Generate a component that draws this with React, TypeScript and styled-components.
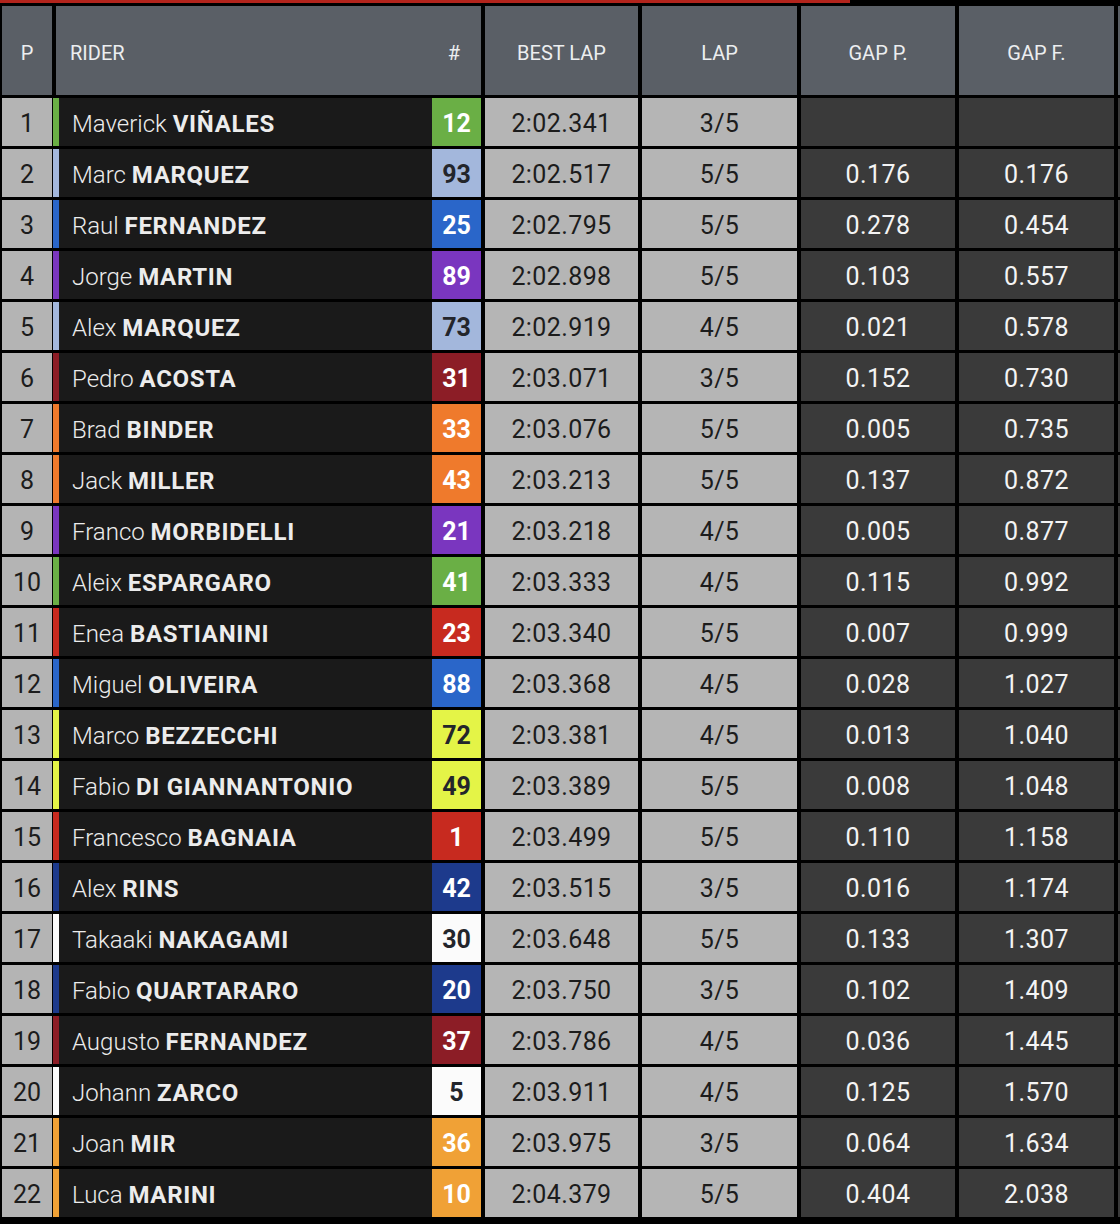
import styled, { createGlobalStyle } from 'styled-components'

const GlobalStyle = createGlobalStyle`
    html, body {
        margin: 0;
        padding: 0;
        background: #000;
    }
    body {
        font-family: Roboto, "Liberation Sans", sans-serif;
    }
`

type Rider = {
    pos: number
    first: string
    last: string
    num: string
    color: string
    dark?: boolean
    best: string
    lap: string
    gapP: string
    gapF: string
}

const GREEN = '#6aaf45'
const LIGHTBLUE = '#a3b7dc'
const BLUE = '#2a66c9'
const PURPLE = '#7a36bf'
const MAROON = '#8c1d26'
const ORANGE = '#ef7a2c'
const RED = '#c72a1f'
const YELLOW = '#e4f447'
const NAVY = '#1d3a8c'
const WHITE = '#fbfbfb'
const AMBER = '#f0a136'

const riders: Rider[] = [
    { pos: 1, first: 'Maverick', last: 'VIÑALES', num: '12', color: GREEN, best: '2:02.341', lap: '3/5', gapP: '', gapF: '' },
    { pos: 2, first: 'Marc', last: 'MARQUEZ', num: '93', color: LIGHTBLUE, dark: true, best: '2:02.517', lap: '5/5', gapP: '0.176', gapF: '0.176' },
    { pos: 3, first: 'Raul', last: 'FERNANDEZ', num: '25', color: BLUE, best: '2:02.795', lap: '5/5', gapP: '0.278', gapF: '0.454' },
    { pos: 4, first: 'Jorge', last: 'MARTIN', num: '89', color: PURPLE, best: '2:02.898', lap: '5/5', gapP: '0.103', gapF: '0.557' },
    { pos: 5, first: 'Alex', last: 'MARQUEZ', num: '73', color: LIGHTBLUE, dark: true, best: '2:02.919', lap: '4/5', gapP: '0.021', gapF: '0.578' },
    { pos: 6, first: 'Pedro', last: 'ACOSTA', num: '31', color: MAROON, best: '2:03.071', lap: '3/5', gapP: '0.152', gapF: '0.730' },
    { pos: 7, first: 'Brad', last: 'BINDER', num: '33', color: ORANGE, best: '2:03.076', lap: '5/5', gapP: '0.005', gapF: '0.735' },
    { pos: 8, first: 'Jack', last: 'MILLER', num: '43', color: ORANGE, best: '2:03.213', lap: '5/5', gapP: '0.137', gapF: '0.872' },
    { pos: 9, first: 'Franco', last: 'MORBIDELLI', num: '21', color: PURPLE, best: '2:03.218', lap: '4/5', gapP: '0.005', gapF: '0.877' },
    { pos: 10, first: 'Aleix', last: 'ESPARGARO', num: '41', color: GREEN, best: '2:03.333', lap: '4/5', gapP: '0.115', gapF: '0.992' },
    { pos: 11, first: 'Enea', last: 'BASTIANINI', num: '23', color: RED, best: '2:03.340', lap: '5/5', gapP: '0.007', gapF: '0.999' },
    { pos: 12, first: 'Miguel', last: 'OLIVEIRA', num: '88', color: BLUE, best: '2:03.368', lap: '4/5', gapP: '0.028', gapF: '1.027' },
    { pos: 13, first: 'Marco', last: 'BEZZECCHI', num: '72', color: YELLOW, dark: true, best: '2:03.381', lap: '4/5', gapP: '0.013', gapF: '1.040' },
    { pos: 14, first: 'Fabio', last: 'DI GIANNANTONIO', num: '49', color: YELLOW, dark: true, best: '2:03.389', lap: '5/5', gapP: '0.008', gapF: '1.048' },
    { pos: 15, first: 'Francesco', last: 'BAGNAIA', num: '1', color: RED, best: '2:03.499', lap: '5/5', gapP: '0.110', gapF: '1.158' },
    { pos: 16, first: 'Alex', last: 'RINS', num: '42', color: NAVY, best: '2:03.515', lap: '3/5', gapP: '0.016', gapF: '1.174' },
    { pos: 17, first: 'Takaaki', last: 'NAKAGAMI', num: '30', color: WHITE, dark: true, best: '2:03.648', lap: '5/5', gapP: '0.133', gapF: '1.307' },
    { pos: 18, first: 'Fabio', last: 'QUARTARARO', num: '20', color: NAVY, best: '2:03.750', lap: '3/5', gapP: '0.102', gapF: '1.409' },
    { pos: 19, first: 'Augusto', last: 'FERNANDEZ', num: '37', color: MAROON, best: '2:03.786', lap: '4/5', gapP: '0.036', gapF: '1.445' },
    { pos: 20, first: 'Johann', last: 'ZARCO', num: '5', color: WHITE, dark: true, best: '2:03.911', lap: '4/5', gapP: '0.125', gapF: '1.570' },
    { pos: 21, first: 'Joan', last: 'MIR', num: '36', color: AMBER, best: '2:03.975', lap: '3/5', gapP: '0.064', gapF: '1.634' },
    { pos: 22, first: 'Luca', last: 'MARINI', num: '10', color: AMBER, best: '2:04.379', lap: '5/5', gapP: '0.404', gapF: '2.038' },
]

const Page = styled.div`
    width: 1120px;
    height: 1224px;
    overflow: hidden;
    background: #000;
`
const TopBar = styled.div`
    width: 850px;
    height: 3px;
    background: #b3241c;
`
const Table = styled.div`
    display: grid;
    grid-template-columns: 50px 425px 153px 155px 154px 155px 40px;
    grid-auto-rows: 48px;
    grid-template-rows: 89px;
    column-gap: 4px;
    row-gap: 3px;
    padding: 3px 0 0 2px;
`
const Head = styled.div<{ $align?: string }>`
    background: #5a5f66;
    color: #eceef0;
    font-size: 20px;
    font-weight: 400;
    padding-top: 4px;
    display: flex;
    align-items: center;
    justify-content: ${p => p.$align ?? 'center'};
`
const RiderHead = styled(Head)`
    padding: 4px 21px 0 14px;
    justify-content: space-between;
`
const Cell = styled.div`
    font-size: 25px;
    letter-spacing: 0.4px;
    padding-top: 3px;
    display: flex;
    align-items: center;
    justify-content: center;
`
const PosCell = styled(Cell)`
    background: #b4b4b4;
    color: #1c1c1c;
    letter-spacing: 0;
`
const RiderCell = styled.div<{ $stripe: string }>`
    margin-left: -3px;
    background: #1a1a1a;
    border-left: 6px solid ${p => p.$stripe};
    display: flex;
    align-items: center;
    color: #ececec;
    font-size: 24px;
`
const Name = styled.div`
    flex: 1;
    padding: 4px 0 0 13px;
    white-space: nowrap;
    font-weight: 300;
    b {
        font-weight: 700;
        letter-spacing: 0.7px;
    }
`
const Badge = styled.div<{ $bg: string; $dark?: boolean }>`
    width: 49px;
    align-self: stretch;
    padding-top: 3px;
    background: ${p => p.$bg};
    color: ${p => (p.$dark ? '#23252b' : '#fff')};
    font-weight: 700;
    font-size: 25px;
    display: flex;
    align-items: center;
    justify-content: center;
`
const LightCell = styled(Cell)`
    background: #b5b5b5;
    color: #1c1c1c;
`
const DarkCell = styled(Cell)`
    background: #3a3a3a;
    color: #f4f4f4;
`

export default function App() {
    return (
        <Page>
            <GlobalStyle />
            <TopBar />
            <Table>
                <Head>P</Head>
                <RiderHead>
                    <span>RIDER</span>
                    <span>#</span>
                </RiderHead>
                <Head>BEST LAP</Head>
                <Head>LAP</Head>
                <Head>GAP P.</Head>
                <Head>GAP F.</Head>
                <Head />
                {riders.map(r => (
                    <Row key={r.pos} r={r} />
                ))}
            </Table>
        </Page>
    )
}

function Row({ r }: { r: Rider }) {
    return (
        <>
            <PosCell>{r.pos}</PosCell>
            <RiderCell $stripe={r.color}>
                <Name>
                    {r.first} <b>{r.last}</b>
                </Name>
                <Badge $bg={r.color} $dark={r.dark}>{r.num}</Badge>
            </RiderCell>
            <LightCell>{r.best}</LightCell>
            <LightCell>{r.lap}</LightCell>
            <DarkCell>{r.gapP}</DarkCell>
            <DarkCell>{r.gapF}</DarkCell>
            <DarkCell />
        </>
    )
}
